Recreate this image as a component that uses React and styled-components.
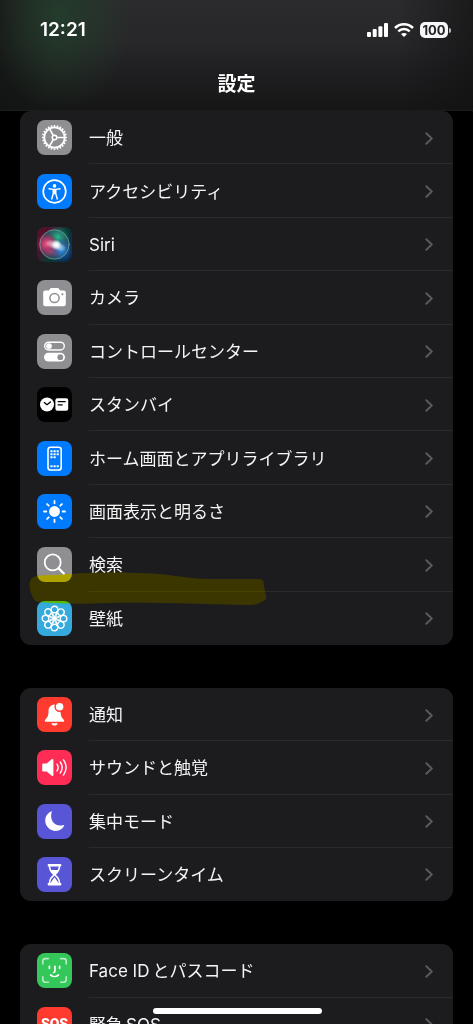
import React from 'react';
import styled, { createGlobalStyle } from 'styled-components';

const GlobalStyle = createGlobalStyle`
  *, *::before, *::after { box-sizing: border-box; }
  body {
    margin: 0;
    background: #000;
    color: #fff;
    font-family: Inter, "Noto Sans CJK JP", sans-serif;
  }
`;

const Screen = styled.div`
  display: flex;
  flex-direction: column;
  height: 100vh;
  overflow: hidden;
`;

const Header = styled.header`
  flex: none;
  height: 111px;
  border-bottom: 1px solid #1c1c1d;
  background:
    radial-gradient(ellipse 70px 96px at 60px 16px, rgba(36, 66, 44, 0.8), rgba(36, 66, 44, 0)),
    linear-gradient(90deg, rgba(16, 20, 17, 0.7), rgba(16, 20, 17, 0.3) 10%, rgba(16, 20, 17, 0) 22% 84%, rgba(16, 16, 17, 0.6)),
    linear-gradient(#2b2b2d, #272729 40%, #1d1d1f 72%, #161616);
`;

const StatusBar = styled.div`
  display: flex;
  align-items: center;
  justify-content: space-between;
  height: 60px;
  padding: 0 22px 0 40px;
`;

const Time = styled.time`
  font-size: 19px;
  font-weight: 600;
  line-height: 24px;
`;

const StatusIcons = styled.div`
  display: flex;
  align-items: center;
  gap: 6px;
  svg { display: block; }
`;

const Battery = styled.div`
  display: flex;
  align-items: center;
  gap: 1px;
  &::after {
    content: "";
    width: 2px;
    height: 5px;
    border-radius: 0 2px 2px 0;
    background: #bdbdbf;
  }
`;

const BatteryLevel = styled.span`
  width: 28px;
  height: 16px;
  border-radius: 5px;
  background: #f6f6f8;
  color: #222224;
  font-size: 13px;
  font-weight: 700;
  line-height: 16px;
  text-align: center;
`;

const Title = styled.h1`
  margin: 13px 0 0;
  font-size: 19px;
  font-weight: 700;
  line-height: 24px;
  text-align: center;
`;

const Main = styled.main`
  display: flex;
  flex-direction: column;
  gap: 43px;
  padding: 0 20px;
`;

const Group = styled.section`
  position: relative;
  flex: none;
`;

const Card = styled.ul`
  display: grid;
  grid-auto-rows: 1fr;
  height: ${p => p.$height}px;
  margin: 0;
  padding: 0;
  list-style: none;
  border-radius: 11px;
  background: #1c1c1e;
`;

const Item = styled.li`
  display: flex;
  min-height: 0;
`;

const RowLink = styled.a`
  flex: 1;
  display: flex;
  align-items: center;
  gap: 17px;
  padding-left: 17px;
  color: #f4f4f5;
  text-decoration: none;
`;

const IconTile = styled.span`
  flex: none;
  width: 35px;
  height: 35px;
  border-radius: 8px;
  overflow: hidden;
  background: ${p => p.$color};
  svg { display: block; }
`;

const RowBody = styled.span`
  flex: 1;
  align-self: stretch;
  display: flex;
  align-items: center;
  justify-content: space-between;
  padding: 2px 20px 0 0;
  border-bottom: 1px solid #2a2a2c;
  ${Item}:last-child & { border-bottom-color: transparent; }
`;

const Label = styled.span`
  font-size: 17px;
  line-height: 24px;
  white-space: nowrap;
`;

const Marker = styled.svg`
  position: absolute;
  left: 9px;
  top: 460px;
  pointer-events: none;
  mix-blend-mode: ${p => p.$blend};
`;

const HomeIndicator = styled.div`
  position: fixed;
  bottom: 10px;
  left: 50%;
  width: 169px;
  height: 6px;
  margin-left: -84px;
  border-radius: 3px;
  background: #fff;
`;

const Glyph = ({ children }) => (
  <svg width="35" height="35" viewBox="0 0 35 35" fill="none" stroke="#fff" strokeLinecap="round" strokeLinejoin="round" aria-hidden="true">
    {children}
  </svg>
);

const spin = (n, draw) => Array.from({ length: n }, (_, i) => (
  <g key={i} transform={`rotate(${(i * 360) / n} 17.5 17.5)`}>{draw}</g>
));

const icons = {
  gear: (
    <Glyph>
      <circle cx="17.5" cy="17.5" r="10.2" strokeWidth="1.8" />
      {spin(24, <path d="M17.5 6.8V5" strokeWidth="1.6" strokeLinecap="butt" />)}
      <circle cx="17.5" cy="17.5" r="2.3" strokeWidth="1.5" />
      {spin(3, <path d="M19.9 17.5H27.5" strokeWidth="1.7" />)}
    </Glyph>
  ),
  accessibility: (
    <Glyph>
      <circle cx="17.5" cy="17.5" r="11.3" strokeWidth="1.7" />
      <circle cx="17.5" cy="11.9" r="1.8" fill="#fff" stroke="none" />
      <path d="M12 14.800 16 15.400h3l4-.6M16.200 15.600v4.200l-1.500 5.200M18.800 15.600v4.200l1.500 5.200" strokeWidth="1.400" />
      <path d="M16 15h3v5.200h-3z" fill="#fff" stroke="none" />
    </Glyph>
  ),
  siri: (
    <Glyph>
      <defs>
        <linearGradient id="siriBase" x1="0" y1="0" x2="1" y2=".6">
          <stop offset="0" stopColor="#5a0f27" />
          <stop offset=".35" stopColor="#4a1230" />
          <stop offset=".65" stopColor="#08392f" />
          <stop offset="1" stopColor="#092e50" />
        </linearGradient>
        <radialGradient id="siriPink"><stop stopColor="#f05a8a" /><stop offset=".5" stopColor="#c93468" stopOpacity=".8" /><stop offset="1" stopColor="#b51d55" stopOpacity="0" /></radialGradient>
        <radialGradient id="siriGreen"><stop stopColor="#2fb98d" /><stop offset="1" stopColor="#16866b" stopOpacity="0" /></radialGradient>
        <radialGradient id="siriBlue"><stop stopColor="#2c9cf1" /><stop offset="1" stopColor="#1555b0" stopOpacity="0" /></radialGradient>
        <radialGradient id="siriWhite"><stop stopColor="#fff" /><stop offset=".3" stopColor="#fff" stopOpacity=".85" /><stop offset="1" stopColor="#fff" stopOpacity="0" /></radialGradient>
      </defs>
      <g stroke="none">
        <path d="M0 0h35v35H0z" fill="url(#siriBase)" />
        <circle cx="17.500" cy="17.500" r="14.600" fill="#2b4a5c" />
        <circle cx="21" cy="10" r="12" fill="url(#siriGreen)" />
        <circle cx="10" cy="17" r="11" fill="url(#siriPink)" />
        <circle cx="24" cy="23" r="12" fill="url(#siriBlue)" />
        <ellipse cx="14" cy="25" rx="10" ry="6" fill="url(#siriPink)" opacity=".4" />
        <ellipse cx="19" cy="18.500" rx="11" ry="5" transform="rotate(20 19 18.500)" fill="url(#siriWhite)" opacity=".8" />
        <circle cx="19.500" cy="17.500" r="5" fill="url(#siriWhite)" />
      </g>
      <circle cx="17.500" cy="17.500" r="14.700" stroke="#85b8b1" strokeWidth=".8" opacity=".8" />
    </Glyph>
  ),
  camera: (
    <Glyph>
      <path d="M8.2 10.4h3.600l1.600-2c.3-.3.6-.4 1-.4h6.200c.4 0 .8.1 1 .4l1.600 2h3.600c1.200 0 2 .8 2 2v11.800c0 1.200-.8 2-2 2H8.200c-1.200 0-2-.8-2-2V12.400c0-1.200.8-2 2-2z" fill="#fff" stroke="none" />
      <circle cx="17.500" cy="18" r="4.600" stroke="#8e8e93" strokeWidth="1.500" />
      <circle cx="25.400" cy="14.300" r="1.100" fill="#8e8e93" stroke="none" />
    </Glyph>
  ),
  controls: (
    <Glyph>
      <rect x="7.700" y="8.200" width="19.600" height="7.800" rx="3.900" strokeWidth="1.400" />
      <circle cx="12" cy="12.100" r="2.900" fill="#fff" stroke="none" />
      <rect x="7" y="18.800" width="21" height="8.800" rx="4.400" fill="#fff" stroke="none" />
      <circle cx="23.300" cy="23.200" r="2.900" fill="#8e8e93" stroke="none" />
    </Glyph>
  ),
  standby: (
    <Glyph>
      <circle cx="10" cy="17.500" r="7" fill="#fff" stroke="none" />
      <path d="M7.300 15.600 10 17.700l3.400-2.800" stroke="#000" strokeWidth="1.300" />
      <rect x="18.400" y="11.200" width="12.800" height="12.600" rx="2" fill="#fff" stroke="none" />
      <path d="M21.200 14.700h7M21.200 17.900h4" stroke="#000" strokeWidth="1.300" />
    </Glyph>
  ),
  home: (
    <Glyph>
      <rect x="11" y="6.200" width="13.200" height="22.800" rx="2.600" strokeWidth="1.600" />
      <g fill="#fff" stroke="none">
        {[[13.4, 9.2], [16.5, 9.2], [19.6, 9.2], [13.4, 12.2], [16.5, 12.2], [19.6, 12.2], [13.4, 15.2], [16.5, 15.2], [13.4, 24.2], [16.5, 24.2], [19.6, 24.2]].map(([x, y]) => (
          <rect key={`${x}-${y}`} x={x} y={y} width="2.200" height="2.100" rx=".5" />
        ))}
      </g>
    </Glyph>
  ),
  sun: (
    <Glyph>
      <circle cx="17.500" cy="17.500" r="5.400" fill="#fff" stroke="none" />
      {spin(8, <path d="M17.500 9.300V7" strokeWidth="1.800" />)}
    </Glyph>
  ),
  search: (
    <Glyph>
      <circle cx="15.700" cy="15.400" r="8" strokeWidth="1.800" />
      <path d="m21.600 21.300 5.200 5.200" strokeWidth="2.400" />
    </Glyph>
  ),
  flower: (
    <Glyph>
      {spin(8, (
        <>
          <circle cx="17.500" cy="8.500" r="3.300" strokeWidth="1.400" />
          <path d="M14.800 10.400 18.600 18.500M20.200 10.400 16.400 18.500" strokeWidth="1" />
        </>
      ))}
    </Glyph>
  ),
  bell: (
    <Glyph>
      <path d="M17.500 7.400c-3.700.3-5.900 2.800-6 6.400 0 5-.9 6.500-3 8.600-.5.500-.7.900-.7 1.300 0 .7.500 1.100 1.300 1.100h16.800c.8 0 1.300-.4 1.300-1.100 0-.4-.2-.8-.7-1.300-2-2-2.900-3.500-3-8.600v-1Z" fill="#fff" stroke="none" />
      <path d="M14.300 26.200h6.400c-.3 1.500-1.500 2.400-3.200 2.400s-2.900-.9-3.200-2.400Z" fill="#fff" stroke="none" />
      <circle cx="22.600" cy="9.800" r="4.500" fill="#fff" stroke="#ff3b30" strokeWidth="1.400" />
    </Glyph>
  ),
  speaker: (
    <Glyph>
      <path d="M5.200 14.800c0-.8.500-1.300 1.300-1.300h3.200l5-4.200c.9-.7 1.700-.3 1.700.7v15c0 1-.8 1.400-1.700.7l-5-4.200H6.500c-.8 0-1.300-.5-1.300-1.300Z" fill="#fff" stroke="none" />
      <path d="M20 14.100c1.400 2.100 1.400 4.700 0 6.800M23.300 12c2.300 3.400 2.300 7.600 0 11M26.500 9.900c3.200 4.700 3.200 10.500 0 15.200" strokeWidth="1.400" />
    </Glyph>
  ),
  moon: (
    <Glyph>
      <path d="M14.700 8.100c.4-.5.100-.9-.5-.7-3.600 1.400-6 5-6 9.100 0 5.800 4.700 10.400 10.500 10.400 3.800 0 6.900-1.900 8.400-5.200.3-.6 0-.9-.6-.7-7.500 2.600-14.400-3.500-11.800-12.900Z" fill="#fff" stroke="none" />
    </Glyph>
  ),
  hourglass: (
    <Glyph>
      <path d="M11.800 8.200h11.400M11.800 27.300h11.400" strokeWidth="2.400" />
      <path d="M12.500 8.500c0 4.400 1.100 6.100 3.600 8 .9.700.9 1.600 0 2.300-2.500 1.900-3.600 3.600-3.600 8M22.500 8.500c0 4.400-1.100 6.100-3.600 8-.9.700-.9 1.600 0 2.300 2.500 1.900 3.600 3.600 3.600 8" strokeWidth="1.600" />
      <path d="M13.800 13h7.400c-.5 1.300-1.400 2.200-3.700 4-2.300-1.800-3.200-2.700-3.700-4ZM17.500 20.200l4 5.800h-8Z" fill="#fff" stroke="none" />
    </Glyph>
  ),
  face: (
    <Glyph>
      <path d="M5.800 11V8.200c0-1.800.8-2.600 2.600-2.600h3M23.600 5.600h3c1.800 0 2.600.8 2.600 2.600V11M5.800 23.800v2.800c0 1.800.8 2.600 2.600 2.600h3M23.600 29.200h3c1.800 0 2.600-.8 2.600-2.600v-2.800" strokeWidth="1.600" opacity=".65" />
      <path d="M12.400 13.300v2M22.600 13.300v2M17.900 13.300v5c0 .8-.4 1.200-1.300 1.200M13.600 22c2.200 2 5.600 2 7.800 0" strokeWidth="1.700" />
    </Glyph>
  ),
};

const SosText = styled.span`
  display: block;
  color: #fff;
  font-family: Roboto, sans-serif;
  font-size: 14px;
  font-weight: 900;
  line-height: 35px;
  text-align: center;
`;

const groups = [
  {
    height: 534,
    marked: true,
    rows: [
      ['一般', '#8e8e93', icons.gear],
      ['アクセシビリティ', '#007aff', icons.accessibility],
      ['Siri', '#20202c', icons.siri],
      ['カメラ', '#8e8e93', icons.camera],
      ['コントロールセンター', '#8e8e93', icons.controls],
      ['スタンバイ', '#000', icons.standby],
      ['ホーム画面とアプリライブラリ', '#007aff', icons.home],
      ['画面表示と明るさ', '#007aff', icons.sun],
      ['検索', '#8e8e93', icons.search],
      ['壁紙', '#35aadc', icons.flower],
    ],
  },
  {
    height: 213,
    rows: [
      ['通知', '#ff3b30', icons.bell],
      ['サウンドと触覚', '#ff2d55', icons.speaker],
      ['集中モード', '#5856d6', icons.moon],
      ['スクリーンタイム', '#5856d6', icons.hourglass],
    ],
  },
  {
    height: 107,
    rows: [
      ['Face ID\u2009とパスコード', '#34c759', icons.face],
      ['緊急\u2009SOS', '#ff3b30', <SosText key="sos">SOS</SosText>],
    ],
  },
];

const Chevron = () => (
  <svg width="8" height="13" viewBox="0 0 8 13" fill="none" stroke="#59595d" strokeWidth="2" strokeLinecap="round" strokeLinejoin="round" aria-hidden="true">
    <path d="m1.300 1.200 5.500 5.300-5.500 5.300" />
  </svg>
);

const Row = ({ label, color, icon }) => (
  <Item>
    <RowLink href="#">
      <IconTile $color={color}>{icon}</IconTile>
      <RowBody>
        <Label>{label}</Label>
        <Chevron />
      </RowBody>
    </RowLink>
  </Item>
);

const markerShape = 'M3 7C8 3 20 5 40 3C65 1 100 1 130 3C150 5 165 8 180 8H229C234 8 235 10 235 15L237 25C238 28 236 30 232 31C228 33 226 34 220 34C170 33 120 31 80 32C55 33 30 33 10 31C4 30 4 26 2 22C0 16 0 10 3 7Z';

const Highlight = () => (
  <>
    <Marker $blend="multiply" width="240" height="36" viewBox="0 0 240 36" aria-hidden="true">
      <path d={markerShape} fill="#fff200" />
    </Marker>
    <Marker $blend="plus-lighter" width="240" height="36" viewBox="0 0 240 36" aria-hidden="true">
      <path d={markerShape} fill="#1f1b00" />
    </Marker>
  </>
);

export default function App() {
  return (
    <Screen>
      <GlobalStyle />
      <Header>
        <StatusBar>
          <Time>12:21</Time>
          <StatusIcons>
            <svg width="21" height="14" viewBox="0 0 21 14" fill="#fff" aria-hidden="true">
              <rect x="0" y="9" width="4" height="5" rx="1" />
              <rect x="5.700" y="6" width="4" height="8" rx="1" />
              <rect x="11.400" y="3.300" width="4" height="10.700" rx="1" />
              <rect x="17" y="0" width="4" height="14" rx="1" />
            </svg>
            <svg width="20" height="14" viewBox="0 0 20 14" fill="none" stroke="#fff" strokeWidth="2.500" aria-hidden="true">
              <path d="M1 5c5-5 13-5 18 0M4.300 8.400c3.300-3.200 8.100-3.200 11.400 0" />
              <path d="M10 14 7 11c1.700-1.500 4.300-1.500 6 0Z" fill="#fff" stroke="none" />
            </svg>
            <Battery><BatteryLevel>100</BatteryLevel></Battery>
          </StatusIcons>
        </StatusBar>
        <Title>設定</Title>
      </Header>
      <Main>
        {groups.map(group => (
          <Group key={group.height}>
            <Card $height={group.height}>
              {group.rows.map(([label, color, icon]) => (
                <Row key={label} label={label} color={color} icon={icon} />
              ))}
            </Card>
            {group.marked && <Highlight />}
          </Group>
        ))}
      </Main>
      <HomeIndicator />
    </Screen>
  );
}
